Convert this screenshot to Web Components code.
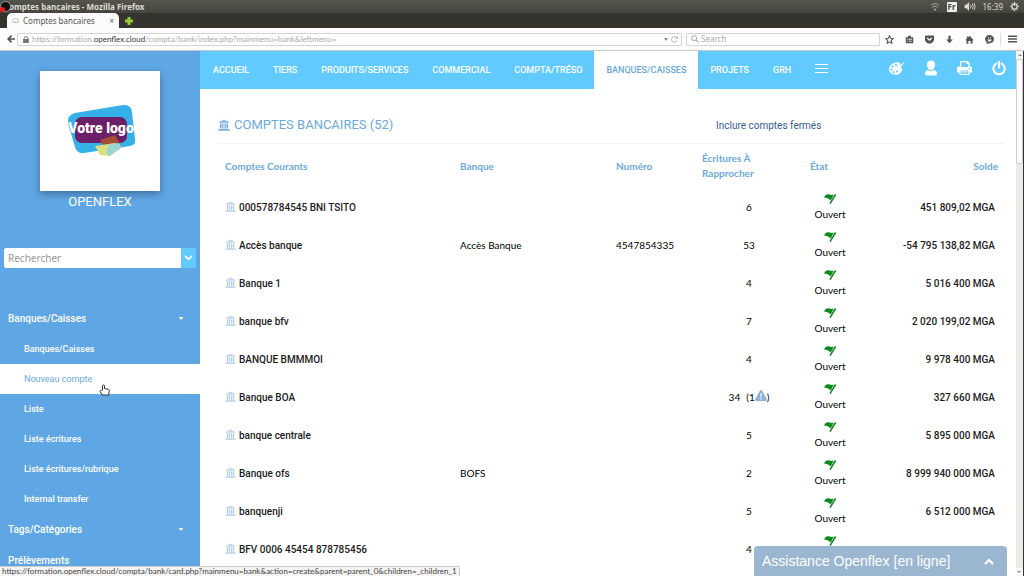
<!DOCTYPE html>
<html lang="fr">
<head>
<meta charset="utf-8">
<meta name="viewport" content="width=device-width, initial-scale=1">
<title>Comptes bancaires</title>
<style>
html,body{margin:0;height:100%}
body{display:flex;flex-direction:column;overflow:hidden;font:10px/14px Roboto,sans-serif;color:#222;background:#fff;
--side:#5fa6e5;--nav:#61caff;--link:#6ba9dc;--ui:Lato,"Noto Sans",sans-serif}
.page{flex:1;min-height:0;display:flex;position:relative}
.content{flex:1;min-width:0;display:flex;flex-direction:column;overflow:hidden}
</style>
</head>
<body>
<browser-chrome address-host="openflex.cloud"></browser-chrome>
<div class="page">
  <side-bar></side-bar>
  <div class="content">
    <top-nav></top-nav>
    <accounts-panel></accounts-panel>
  </div>
  <scroll-rail></scroll-rail>
  <hover-status>https://formation.openflex.cloud/compta/bank/card.php?mainmenu=bank&amp;action=create&amp;parent=parent_0&amp;children=_children_1</hover-status>
  <support-chat>Assistance Openflex [en ligne]</support-chat>
</div>
<script>
const define=(name,html,setup)=>customElements.define(name,class extends HTMLElement{
  connectedCallback(){
    if(this.shadowRoot)return;
    const root=this.attachShadow({mode:'open'});
    const t=document.createElement('template');
    t.innerHTML='<style>*{box-sizing:border-box}a{color:inherit;text-decoration:none}button{border:0;background:none;padding:0;margin:0;color:inherit;font:inherit;display:flex;align-items:center;justify-content:center}</style>'+(typeof html==='function'?html(this):html);
    root.append(t.content.cloneNode(true));
    if(setup)setup(this,root);
  }
});

const icons={
  bank:['0 0 24 24','<path d="M12 1 22 6v2H2V6zM3 20h18v3H3z" opacity=".75"/><path d="M0 21h24v2H0z"/><path d="M4 9h3v10H4zM8.500 9h2.500v10H8.500zM13 9h2.500v10H13zM17 9h3v10h-3z"/>'],
  flag:['0 0 12 10','<path d="M0 3.500C1.500.3 3.500-.2 5.500.6 7 1.100 8 1 9.600.800L7 6C5.500 6 4.500 4.500 3 4 2 3.700 1 3.700 0 3.500Z"/><path d="M11.500.5 6 9.700" stroke="currentColor" stroke-width="1.500" fill="none"/>'],
  warn:['0 0 24 22','<path d="M12 0c1 0 1.500.4 2 1.200l9.500 17c1 2-.2 3.800-2.200 3.800H2.700C.7 22-.5 20.200.5 18.200l9.500-17C10.500.4 11 0 12 0z"/><path d="M10.600 6.500h2.800l-.5 8h-1.800zM10.600 16.500h2.800v2.500h-2.800z" fill="#fff"/>'],
  caret:['0 0 6 4','<path d="M0 0h6L3 4z"/>'],
  down:['0 0 10 7','<path d="m1 1 4 4 4-4" fill="none" stroke="currentColor" stroke-width="2"/>'],
  up:['0 0 10 7','<path d="m1 6 4-4 4 4" fill="none" stroke="currentColor" stroke-width="2.200"/>'],
  lines:['0 0 13 10','<path d="M0 0h13v2H0zM0 4h13v2H0zM0 8h13v2H0z"/>'],
  thin:['0 0 13 9','<path d="M0 0h13v1H0zM0 4h13v1H0zM0 8h13v1H0z"/>'],
  palette:['0 0 32 28','<path fill-rule="evenodd" d="M14 3C22 2 24 5 22 8l-3 3c-1 2 1 3 4 3 5 0 4 5 1 8-4 6-12 7-17 4-9-4-9-13-3-18 3-3 7-5 10-5zM7 9a2 2 0 1 0 .1 0zM14 6a2 2 0 1 0 .1 0zM5 15a2 2 0 1 0 .1 0zM9 20a2.200 2.200 0 1 0 .1 0zM16 19a2 2 0 1 0 .1 0z"/><path d="M32 0 24 12c-2 3-5 4-8 2 3-1 3-5 7-6z"/>'],
  user:['0 0 24 32','<path d="M12 1c5 0 8 3 8 8 0 4-2 8-4 10-2 2-6 2-8 0-2-2-4-6-4-10 0-5 3-8 8-8z"/><path d="M6 20c3 3 9 3 12 0 4 1 6 3 6 7 0 3-1 4-3 4H3c-2 0-3-1-3-4 0-4 2-6 6-7z"/>'],
  print:['0 0 30 28','<path fill-rule="evenodd" d="M6 0h15l4 4v7h2c2 0 3 1 3 3v9h-5v5H5v-5H0v-9c0-2 1-3 3-3h3zM8.500 2.500V12h14V6H19V2.500zM7.500 19v7h15v-7zM25 13.500a1.500 1.500 0 1 0 .1 0z"/><path d="M9 20h12v1.500H9zM9 23h12v1.500H9z" opacity=".7"/>'],
  power:['0 0 26 28','<path d="M8 5a10.500 10.500 0 1 0 10 0" fill="none" stroke="currentColor" stroke-width="4" stroke-linecap="round"/><path d="M11 0h4v14h-4z"/>'],
  plus:['0 0 8 8','<path d="M2.500 0h3v2.500H8v3H5.500V8h-3V5.500H0v-3h2.500z"/>'],
  back:['0 0 10 10','<path d="m5 0 1.500 1.500L4 4h6v2H4l2.500 2.500L5 10 0 5z"/>'],
  lock:['0 0 10 12','<path d="M2 5V4a3 3 0 0 1 6 0v1" fill="none" stroke="currentColor" stroke-width="1.600"/><path d="M0 5h10v7H0z"/>'],
  reload:['0 0 10 10','<path d="M8.500 6.500a4 4 0 1 1-.5-4" fill="none" stroke="currentColor" stroke-width="1.300"/><path d="M10 0v4H6z"/>'],
  search:['0 0 10 10','<path d="M4 1a3 3 0 1 0 .1 0M6.500 6.500 9.500 9.500" fill="none" stroke="currentColor" stroke-width="1.300"/>'],
  star:['0 0 12 12','<path d="m6 1 1.500 3.400 3.700.4-2.800 2.500.8 3.700L6 9.200 2.800 11l.8-3.700L.8 4.800l3.700-.4z" fill="none" stroke="currentColor" stroke-width="1.400"/>'],
  clip:['0 0 12 12','<path fill-rule="evenodd" d="M4 3V1h4v2h3v8H1V3zM3 5v1.200h1V5zM5 5v1.200h4V5zM3 7.500v1.200h1V7.500zM5 7.500v1.200h4V7.500z"/>'],
  pocket:['0 0 12 11','<path d="M1 0h10q1 0 1 1v4a6 6 0 0 1-12 0V1q0-1 1-1z"/><path d="m3 3.500 3 3 3-3" fill="none" stroke="#fff" stroke-width="1.600"/>'],
  download:['0 0 12 12','<path d="M4.500 1h3v5h3L6 11 1.500 6h3z"/>'],
  home:['0 0 12 12','<path d="m6 1 5.500 5.500-1 .8-.5-.3V11.500H7.500V8h-3v3.500H2V7l-.5.300-1-.8L2.500 4.500V2H4v1z"/>'],
  hello:['0 0 12 12','<path d="M6 0a6 5.500 0 0 1 0 11L2 12l.5-2A5.500 5.500 0 0 1 6 0z"/><path d="M3 6h6q-1 3-3 3T3 6M4 3h1v1.500H4zM7 3h1v1.500H7z" fill="#fff"/>'],
  wifi:['0 0 12 10','<path d="M1 3q5-4 10 0M2.500 5.500q3.500-3 7 0" fill="none" stroke="currentColor" stroke-width="1.200"/><path d="M4 7h4L6 10z"/>'],
  sound:['0 0 12 10','<path d="M0 3h2l3-3v10L2 7H0z"/><path d="M6.500 3q1.500 2 0 4M8.500 2q2 3 0 6M10.500 1q2.500 4 0 8" fill="none" stroke="currentColor"/>'],
  gear:['0 0 12 12','<path d="M6 2.500a3.500 3.500 0 1 0 .1 0" fill="none" stroke="currentColor" stroke-width="1.800"/><path d="M5.200 0h1.600v5H5.200zM0 5.200h2v1.600H0zM10 5.200h2v1.600h-2zM5.200 10h1.600v2H5.200zM1.500 2.500l1-1 1.500 1.500-1 1zM8 3l1.500-1.500 1 1L9 4zM1.500 9.500 3 8l1 1-1.500 1.500zM8 9l1-1 1.500 1.500-1 1z"/>'],
  arrow:['0 0 4 4','<path d="M0 3 2 1l2 2z"/>']
};
define('ui-icon',el=>{
  const [box,body]=icons[el.getAttribute('name')];
  return `<style>:host{display:inline-flex;flex:none;width:var(--w,10px);height:var(--h,var(--w,10px))}svg{width:100%;height:100%;display:block}</style><svg viewBox="${box}" fill="currentColor" aria-hidden="true">${body}</svg>`;
});

define('browser-chrome',el=>`<style>
:host{display:block;flex:none;font:8px/12px var(--ui);border-bottom:1px solid #c9c9c5}
.title{height:13px;display:flex;align-items:center;justify-content:space-between;background:linear-gradient(#56554c,#45443e);color:#dfdbd2;padding:0 5px 0 0}
.title b{margin-left:-2px;font-family:"Noto Sans",sans-serif}
.name,.tray{display:flex;align-items:center}
.rec{width:11px;height:11px;border-radius:50%;background:#111;border:1px solid #999;position:relative}
.rec::after{content:"";position:absolute;left:-1px;bottom:-1px;width:5px;height:5px;border-radius:50%;background:#f01818}
.tray{gap:7px;font-family:"Noto Sans",sans-serif}
.fr{background:#eee;color:#444;width:10px;height:10px;line-height:10px;text-align:center;border-radius:1px;font-weight:700}
.tabs{height:15px;background:#34332e;display:flex;align-items:center;gap:6px;padding-left:7px;color:#96c934}
.tab{align-self:stretch;width:112px;background:#fcfcfc;color:#555;border-radius:5px 5px 0 0;display:flex;align-items:center;gap:4px;padding:0 5px;font-family:"Noto Sans",sans-serif}
.tab span{flex:1}
.fav{width:7px;height:5px;border-radius:50%;border:1px solid #c5d5c5;border-bottom-color:#9c9}
.bar{height:22px;background:#fdfdfd;display:flex;align-items:center;padding:0 7px;color:#555;gap:4px}
.url,.find{height:13px;border:1px solid #d4d4d4;display:flex;align-items:center;background:#fff;border-radius:1px;color:#aaa}
.url{flex:1;gap:3px;padding:0 3px 0 5px;margin-left:-2px;min-width:0}
.url span{flex:1;white-space:nowrap;overflow:hidden}.url b{font-weight:400;color:#333}
.find{width:194px;padding:0 4px;gap:2px;font-family:"Noto Sans",sans-serif}
input{border:0;outline:0;background:none;min-width:0;flex:1;padding:0;font:inherit;height:11px}
input::placeholder{color:#aaa;opacity:1}
.tools{display:flex;gap:10px;align-items:center}
.tools button{width:10px}
.tools i{width:1px;height:12px;background:#ddd;margin:0 -4px}
</style>
<div class="title"><div class="name"><span class="rec"></span><b>omptes bancaires - Mozilla Firefox</b></div>
<div class="tray"><ui-icon name="wifi" style="--w:10px;opacity:.6"></ui-icon><span class="fr">Fr</span><ui-icon name="sound" style="--w:12px;--h:9px"></ui-icon><span>16:39</span><ui-icon name="gear" style="--w:9px"></ui-icon></div></div>
<div class="tabs"><div class="tab"><i class="fav"></i><span>Comptes bancaires</span><button aria-label="Fermer">×</button></div><button aria-label="Nouvel onglet"><ui-icon name="plus" style="--w:8px"></ui-icon></button></div>
<div class="bar"><button aria-label="Retour"><ui-icon name="back" style="--w:8px"></ui-icon></button>
<div class="url"><ui-icon name="lock" style="--w:6px;--h:7px;color:#777"></ui-icon><span>https://formation.<b>${el.getAttribute('address-host')}</b>/compta/bank/index.php?mainmenu=bank&amp;leftmenu=</span><ui-icon name="caret" style="--w:4px;--h:3px;color:#777"></ui-icon><ui-icon name="reload" style="--w:7px"></ui-icon></div>
<label class="find"><ui-icon name="search" style="--w:8px"></ui-icon><input aria-label="Search" placeholder="Search"></label>
<div class="tools">${['star','clip','pocket','download','home','hello'].map(n=>`<button aria-label="${n}"><ui-icon name="${n}" style="--w:9px"></ui-icon></button>`).join('')}<i></i><button aria-label="menu"><ui-icon name="lines" style="--w:9px;--h:8px"></ui-icon></button></div></div>`);

define('menu-item',el=>`<style>
:host{display:block;color:#fff}
a{display:flex;align-items:center;justify-content:space-between;height:31px;padding:0 16px 0 8px;font:500 10px/14px Roboto,sans-serif}
:host([sub]) a{height:30px;padding-left:24px;font-size:9px}
:host([active]) a{background:#fff;color:var(--link);font-weight:400}
</style><a href="#"><slot></slot>${el.hasAttribute('open')?'<ui-icon name="caret" style="--w:6px;--h:3px"></ui-icon>':''}</a>`);

define('side-bar',`<style>
:host{display:flex;flex-direction:column;flex:none;width:200px;background:var(--side);color:#fff;overflow:hidden;position:relative}
.brand{display:flex;flex-direction:column;align-items:center;padding-top:20px;font:400 13px/22px Roboto,sans-serif}
.logo{width:120px;height:120px;background:#fff;box-shadow:0 3px 8px #0005;display:block}
form{display:flex;height:23px;margin:35px 4px;border-radius:3px;overflow:hidden;background:#fff}
input{flex:1;min-width:0;border:0;outline:0;padding:0 4px;font:10px/14px "Noto Sans",sans-serif;background:#fff}
input::placeholder{color:#999;opacity:1}
form button{width:15px;background:var(--nav)}
.hand{position:absolute;left:99px;top:333px;width:11px;height:12px}
</style>
<div class="brand"><svg class="logo" viewBox="0 0 120 120" role="img" aria-label="Votre logo">
<path d="M35 42 83 34q8-1 9 7l3 27q1 6-5 7L44 82q-7 1-9-6L28 52q-1-8 7-10z" fill="#35b0e8"/>
<rect x="35" y="46" width="52" height="26" rx="7" fill="#6b1f68"/>
<path d="m60 69 15-5 7 12-13 9z" fill="#a44c35"/><path d="m55 75 20-3 5 3-11 10-9-1z" fill="#d9df7c"/><path d="m69 73 10-1 3 4-12 9-4-3z" fill="#9bd6d0"/>
<text x="61" y="62" text-anchor="middle" font-family="Roboto,sans-serif" font-weight="900" font-size="14" fill="#fff">Votre logo</text></svg>
<span>OPENFLEX</span></div>
<form><input aria-label="Rechercher" placeholder="Rechercher"><button type="button" aria-label="Options"><ui-icon name="down" style="--w:9px;--h:6px"></ui-icon></button></form>
<nav><menu-item open>Banques/Caisses</menu-item>
<menu-item sub>Banques/Caisses</menu-item><menu-item sub active>Nouveau compte</menu-item><menu-item sub>Liste</menu-item><menu-item sub>Liste écritures</menu-item><menu-item sub>Liste écritures/rubrique</menu-item><menu-item sub>Internal transfer</menu-item>
<menu-item open>Tags/Catégories</menu-item><menu-item>Prélèvements</menu-item></nav>
<svg class="hand" viewBox="0 0 11 12" aria-hidden="true"><path d="M3.500 6V2q0-1 1-1t1 1v2.500l4 .8q1 .2.800 1.500L9.500 11h-6L1 7.500q0-1.500 1.500-1z" fill="#fff" stroke="#333"/></svg>`);

define('top-nav',`<style>
:host{display:flex;flex:none;height:38px;background:var(--nav);color:#fff;align-items:stretch;padding:0 10px 0 1px;font-size:9px;font-weight:500}
nav{display:flex;flex:1}
nav a,nav button{display:flex;align-items:center;padding:0 12px;white-space:nowrap}
nav a[aria-current]{background:#fff;color:var(--link)}
nav button{padding-bottom:4px}
.acts{display:flex;align-items:center;gap:20px;padding-bottom:4px}
</style><nav><a href="#">ACCUEIL</a><a href="#">TIERS</a><a href="#">PRODUITS/SERVICES</a><a href="#">COMMERCIAL</a><a href="#">COMPTA/TRÉSO</a><a href="#" aria-current="page">BANQUES/CAISSES</a><a href="#">PROJETS</a><a href="#">GRH</a><button aria-label="Menu"><ui-icon name="thin" style="--w:13px;--h:9px"></ui-icon></button></nav>
<div class="acts"><button aria-label="Thème"><ui-icon name="palette" style="--w:16px;--h:14px"></ui-icon></button><button aria-label="Utilisateur"><ui-icon name="user" style="--w:12px;--h:16px"></ui-icon></button><button aria-label="Imprimer"><ui-icon name="print" style="--w:15px;--h:14px"></ui-icon></button><button aria-label="Quitter"><ui-icon name="power" style="--w:14px;--h:15px"></ui-icon></button></div>`);

const accounts=[
 ['000578784545 BNI TSITO','','','6','451 809,02'],['Accès banque','Accès Banque','4547854335','53','-54 795 138,82'],
 ['Banque 1','','','4','5 016 400'],['banque bfv','','','7','2 020 199,02'],['BANQUE BMMMOI','','','4','9 978 400'],
 ['Banque BOA','','','34','327 660',1],['banque centrale','','','5','5 895 000'],['Banque ofs','BOFS','','2','8 999 940 000'],
 ['banquenji','','','5','6 512 000'],['BFV 0006 45454 878785456','','','4','']];
define('accounts-panel',`<style>
:host{display:block;padding:0 11px 0 18px}
header{height:55px;display:grid;grid-template-columns:498px 1fr;align-items:center;padding-top:18px;border-bottom:1px solid #f4f4f4}
h1{margin:0;font:400 13px/18px Roboto,sans-serif;color:var(--link);display:flex;align-items:center;gap:4px}
header a{color:#34608e;padding-top:2px}
table{width:100%;table-layout:fixed;border-collapse:collapse}
th{height:44px;padding:0 7px;text-align:left;color:var(--link);font:700 10px/15px var(--ui)}
td{height:38px;padding:0 7px;line-height:16px;color:#1c1c1c;font-weight:500}
tbody{line-height:16px}
th:last-child{text-align:right}td:last-child{text-align:right;padding-right:10px}
td:first-child,td:last-child{padding-top:2px}
.u{font:400 10px/16px var(--ui);color:#000}.c{text-align:center}
td a{display:flex;align-items:center;gap:3px}td a ui-icon{color:#b1cbe0;margin-bottom:4px}
.warn{margin-left:6px}.warn ui-icon{color:#8fb0d2}
.flag{display:block;color:#0a8a1a;height:14px}
</style><header><h1><ui-icon name="bank" style="--w:12px"></ui-icon>COMPTES BANCAIRES (52)</h1><a href="#">Inclure comptes fermés</a></header>
<table><colgroup><col style="width:235px"><col><col style="width:86px"><col style="width:108px"><col style="width:54px"><col style="width:148px"></colgroup>
<thead><tr><th>Comptes Courants</th><th>Banque</th><th>Numéro</th><th>Écritures À Rapprocher</th><th>État</th><th>Solde</th></tr></thead><tbody></tbody></table>`,
(el,root)=>{root.querySelector('tbody').innerHTML=accounts.map(([n,b,num,r,s,w])=>`<tr><td><a href="#"><ui-icon name="bank" style="--w:11px"></ui-icon>${n}</a></td><td class="u">${b}</td><td class="u">${num}</td><td class="u c">${r}${w?'<span class="warn">(1<ui-icon name="warn" style="--w:12px;--h:11px"></ui-icon>)</span>':''}</td><td class="u c"><span class="flag"><ui-icon name="flag" style="--w:12px;--h:10px"></ui-icon></span>${s?'Ouvert':'&nbsp;'}</td><td>${s?s+' MGA':''}</td></tr>`).join('')});

define('scroll-rail',`<style>
:host{display:flex;flex-direction:column;flex:none;width:7px;background:#ecebe8;border-right:1px solid #333;color:#888}
span{height:8px;display:flex;align-items:center;justify-content:center;background:#f8f8f8}
i{height:20%;background:#fff;border:1px solid #ccc;border-radius:2px;margin-bottom:auto}
span:last-child{transform:rotate(180deg)}
</style><span><ui-icon name="arrow" style="--w:4px"></ui-icon></span><i></i><span><ui-icon name="arrow" style="--w:4px"></ui-icon></span>`);

define('hover-status',`<style>
:host{position:absolute;left:0;bottom:0;background:#f4f4f3;border:1px solid #ccc;border-width:1px 1px 0 0;border-radius:0 2px 0 0;padding:0 2px;font:8px/9px var(--ui);color:#444;white-space:nowrap}
</style><slot></slot>`);

define('support-chat',`<style>
:host{position:absolute;right:17px;bottom:0;width:253px}
button{width:100%;height:30px;justify-content:space-between;background:#9bb6d1;color:#fff;border-radius:4px 4px 0 0;padding:0 13px 0 8px;font:14px/20px "Liberation Sans",Arial,sans-serif}
</style><button><slot></slot><ui-icon name="up" style="--w:10px;--h:7px"></ui-icon></button>`);
</script>
</body>
</html>
